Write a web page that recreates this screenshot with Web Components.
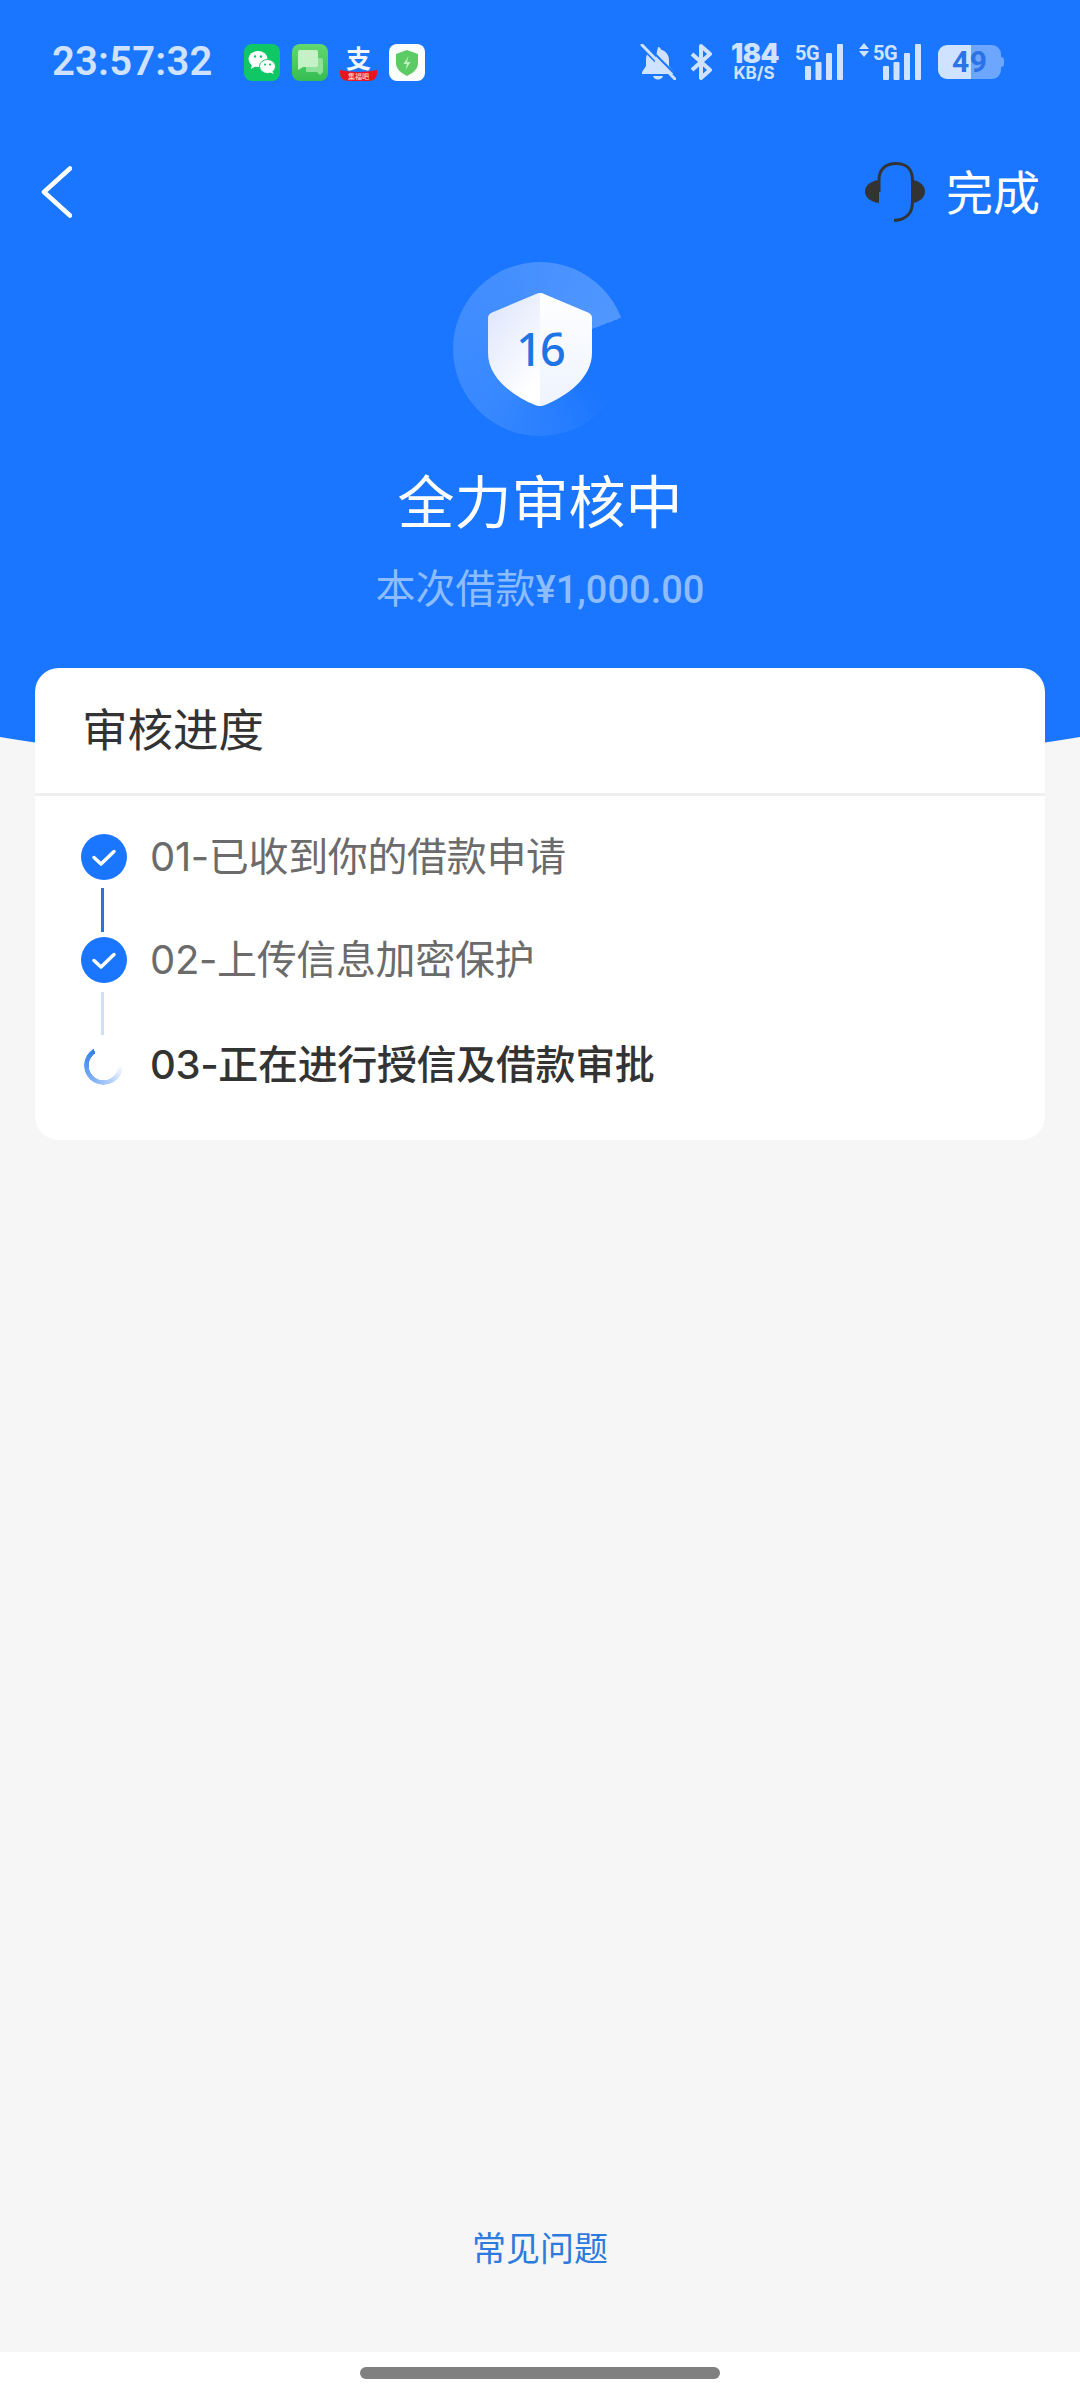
<!DOCTYPE html>
<html lang="zh">
<head>
<meta charset="utf-8">
<title>全力审核中</title>
<style>
  html, body { margin: 0; padding: 0; }
  body { width: 1080px; height: 2400px; overflow: hidden; background: #f6f6f6; font-family: Roboto, "Noto Sans CJK SC", sans-serif; }
  review-page { height: 2400px; }
</style>
</head>
<body>
<review-page>
  <hero-panel label="本次借款" amount="¥1,000.00" title="全力审核中" slot="hero">
    <status-bar slot="status" time="23:57:32"></status-bar>
    <nav-bar slot="nav" action="完成"></nav-bar>
    <shield-timer slot="timer" count="16"></shield-timer>
  </hero-panel>
  <progress-card slot="card" heading="审核进度">
    <progress-step state="done" line="done">01-已收到你的借款申请</progress-step>
    <progress-step state="done" line="pending">02-上传信息加密保护</progress-step>
    <progress-step state="active">03-正在进行授信及借款审批</progress-step>
  </progress-card>
  <faq-link slot="faq">常见问题</faq-link>
  <home-bar slot="home"></home-bar>
</review-page>

<script>
class ReviewPage extends HTMLElement {
  constructor(){
    super();
    const template = document.createElement('template');
    template.innerHTML = `
    <style>
      :host { display: flex; flex-direction: column; width: 1080px; }
      .grow { flex: 1; }
      .card { display: block; margin-top: -69px; position: relative; z-index: 1; }
    </style>
    <slot name="hero"></slot>
    <div class="card"><slot name="card"></slot></div>
    <div class="grow"></div>
    <slot name="faq"></slot>
    <slot name="home"></slot>`;
    this.attachShadow({mode: 'open'}).appendChild(template.content.cloneNode(true));
  }
}

class HeroPanel extends HTMLElement {
  constructor(){
    super();
    const template = document.createElement('template');
    template.innerHTML = `
    <style>
      :host { display: block; position: relative; height: 737px; background: #1a76ff; color: #fff; }
      /* bottom bulge of the blue header, runs on under the card */
      .bulge { position: absolute; left: 0; top: 577px; width: 1080px; height: 200px; overflow: hidden; }
      .bulge::before { content: ''; position: absolute; left: -360px; top: -200px; width: 1800px; height: 400px; border-radius: 50%; background: #1a76ff; }
      .inner { position: relative; display: flex; flex-direction: column; align-items: center; }
      .title { margin: 27px 0 0; font: 400 57px/70px "Noto Sans CJK SC", sans-serif; }
      .amount { margin: 32px 0 0; font-size: 40px; line-height: 50px; color: #8dbcff; white-space: nowrap; }
      .amount b { font-size: 38px; font-weight: 500; }
      ::slotted([slot="status"]), ::slotted([slot="nav"]) { align-self: stretch; }
    </style>
    <div class="bulge"></div>
    <div class="inner">
      <slot name="status"></slot>
      <slot name="nav"></slot>
      <slot name="timer"></slot>
      <h1 class="title"></h1>
      <div class="amount"><span></span><b></b></div>
    </div>`;
    this.root = this.attachShadow({mode: 'open'});
    this.root.appendChild(template.content.cloneNode(true));
    this.root.querySelector('.title').textContent = this.getAttribute('title');
    this.root.querySelector('.amount span').textContent = this.getAttribute('label');
    this.root.querySelector('.amount b').textContent = this.getAttribute('amount');
  }
}

class StatusBar extends HTMLElement {
  constructor(){
    super();
    const template = document.createElement('template');
    template.innerHTML = `
    <style>
      :host { display: flex; align-items: center; height: 122px; padding: 2px 0 0 52px; box-sizing: border-box; color: #cfe2ff; font-family: Inter, Roboto, sans-serif; }
      svg { display: block; flex: none; }
      .time { width: 192px; font: 600 40px/44px Roboto, sans-serif; letter-spacing: .2px; }
      .apps { display: flex; align-items: center; gap: 12px; }
      .apps svg { width: 36px; height: 37px; }
      .ali { display: flex; flex-direction: column; align-items: center; width: 37px; height: 37px; }
      .ali .zhi { height: 26px; font: 700 25px/26px "Noto Sans CJK SC", sans-serif; color: #f2f7ff; }
      .ali .band { position: relative; width: 37px; height: 11px; text-align: center; font: 500 7px/12px "Noto Sans CJK SC", sans-serif; color: #ffd9c8; }
      .apps .ali svg { position: absolute; left: 0; top: 0; width: 37px; height: 11px; }
      .ali .band span { position: relative; }
      .right { display: flex; align-items: center; margin-left: auto; margin-right: 76px; }
      .speed { width: 46px; margin: 0 18px 0 19px; text-align: center; font-weight: 700; white-space: nowrap; }
      .speed b { display: block; font-size: 27px; line-height: 22px; letter-spacing: -.5px; }
      .speed i { display: block; font-style: normal; font-size: 17px; line-height: 16px; }
      .sig { position: relative; width: 48px; height: 36px; }
      .sig span { position: absolute; left: 0; top: 0; font: 700 20px/18px Roboto, sans-serif; letter-spacing: -.5px; }
      .sig svg { position: absolute; right: 0; top: 0; }
      .arrows { margin-left: 16px; }
      .batt { position: relative; width: 66px; height: 34px; margin-left: 17px; }
      .batt .bg { display: block; }
      .batt span { position: absolute; left: 14px; top: 0; font: 700 30px/34px Roboto, sans-serif; color: #2a72e6; letter-spacing: .5px; }
    </style>
    <div class="time"></div>
    <div class="apps">
      <svg viewBox="0 0 36 37" aria-label="微信">
        <rect width="36" height="37" rx="8" fill="#10c765"/>
        <ellipse cx="14" cy="15" rx="9.500" ry="8" fill="#fff"/>
        <path d="M8 20l-1 5 5-3z" fill="#fff"/>
        <ellipse cx="23.500" cy="22.500" rx="8" ry="7" fill="#fff" stroke="#10c765" stroke-width="1"/>
        <path d="M28 27l2 3-5-2z" fill="#fff"/>
        <circle cx="11" cy="12.500" r="1.200" fill="#10c765"/><circle cx="17" cy="12.500" r="1.200" fill="#10c765"/>
        <circle cx="21" cy="20.500" r="1.100" fill="#10c765"/><circle cx="26" cy="20.500" r="1.100" fill="#10c765"/>
      </svg>
      <svg viewBox="0 0 36 37" aria-label="信息">
        <defs><linearGradient id="msg" x1="0" y1="0" x2="0" y2="1"><stop offset="0" stop-color="#62d96f"/><stop offset="1" stop-color="#35bd52"/></linearGradient></defs>
        <rect width="36" height="37" rx="8" fill="url(#msg)"/>
        <path d="M14 14h15a2 2 0 0 1 2 2v12l-3 3-3-3H14z" fill="#8fe09a"/>
        <path d="M8 6h16a2 2 0 0 1 2 2v13a2 2 0 0 1-2 2H11l-5 3V8a2 2 0 0 1 2-2z" fill="#c6f0c6"/>
      </svg>
      <div class="ali">
        <div class="zhi">支</div>
        <div class="band">
          <svg viewBox="0 0 37 11"><path d="M0 0q18.500 4 37 0v3q0 8-9 8H9q-9 0-9-8z" fill="#e8151f"/></svg>
          <span>集福吧</span>
        </div>
      </div>
      <svg viewBox="0 0 36 37" aria-label="安全">
        <rect width="36" height="37" rx="8" fill="#fbfffb"/>
        <path d="M18 6l11 4v9c0 6-5 10-11 13C12 29 7 25 7 19v-9z" fill="#5ccb66"/>
        <path d="M19.500 12l-5 8h3.500l-1.500 6 5-8h-3.500z" fill="#bff0bf"/>
      </svg>
    </div>
    <div class="right">
      <svg width="36" height="36" viewBox="0 0 36 36" fill="#cfe2ff" aria-label="静音">
        <path d="M18 3c1.700 0 2.800 1 2.800 2.500C26 7 29 11 29 16v6l5 6v2H12z"/>
        <path d="M6 15c0-1.500.3-3 1-4.500L26 30H2v-2l4-6z"/>
        <path d="M13 32h10c-.5 2.200-2.500 3.500-5 3.500s-4.500-1.300-5-3.500z"/>
        <path d="M4 -1l34 34" stroke="#1a76ff" stroke-width="2"/>
        <path d="M2 1l33 34" stroke="#cfe2ff" stroke-width="3" stroke-linecap="round"/>
      </svg>
      <svg width="22" height="36" viewBox="0 0 22 36" fill="none" stroke="#cfe2ff" stroke-width="4" stroke-linejoin="round" style="margin-left:14px" aria-label="蓝牙">
        <path d="M2 10l18 16-9 8V2l9 8L2 26"/>
      </svg>
      <div class="speed"><b>184</b><i>KB/S</i></div>
      <div class="sig"><span>5G</span>
        <svg width="38" height="36" viewBox="0 0 38 36" fill="#cfe2ff"><rect x="0" y="22" width="6" height="14" rx="1"/><rect x="10.500" y="18" width="6" height="18" rx="1"/><rect x="21" y="9" width="6" height="27" rx="1"/><rect x="32" y="0" width="6" height="36" rx="1"/></svg>
      </div>
      <svg class="arrows" width="10" height="14" viewBox="0 0 10 14" fill="#cfe2ff" style="align-self:flex-start"><path d="M5 0l5 6H0zM5 14L0 8h10z"/></svg>
      <div class="sig" style="margin-left:4px"><span>5G</span>
        <svg width="38" height="36" viewBox="0 0 38 36" fill="#cfe2ff"><rect x="0" y="22" width="6" height="14" rx="1"/><rect x="10.500" y="18" width="6" height="18" rx="1"/><rect x="21" y="9" width="6" height="27" rx="1"/><rect x="32" y="0" width="6" height="36" rx="1"/></svg>
      </div>
      <div class="batt">
        <svg class="bg" width="66" height="34" viewBox="0 0 66 34">
          <path d="M33 0h21a9 9 0 0 1 9 9v16a9 9 0 0 1-9 9H33z" fill="#6ca6ff"/>
          <path d="M9 0h24v34H9a9 9 0 0 1-9-9V9a9 9 0 0 1 9-9z" fill="#cfe2ff"/>
          <path d="M63 12a3 3 0 0 1 3 3v4a3 3 0 0 1-3 3z" fill="#6ca6ff"/>
        </svg>
        <span>49</span>
      </div>
    </div>`;
    this.root = this.attachShadow({mode: 'open'});
    this.root.appendChild(template.content.cloneNode(true));
    this.root.querySelector('.time').textContent = this.getAttribute('time');
  }
}

class NavBar extends HTMLElement {
  constructor(){
    super();
    const template = document.createElement('template');
    template.innerHTML = `
    <style>
      :host { display: flex; align-items: center; height: 140px; padding: 0 40px 0 41px; box-sizing: border-box; }
      svg { display: block; flex: none; }
      .right { display: flex; align-items: center; gap: 21px; margin-left: auto; }
      .action { margin-top: -4px; font: 400 47px/60px "Noto Sans CJK SC", sans-serif; color: #fff; }
    </style>
    <svg width="31" height="52" viewBox="0 0 31 52" fill="none" stroke="#fff" stroke-width="4.500" stroke-linecap="round" stroke-linejoin="round" aria-label="返回">
      <path d="M29 2.500L3 26l26 23.500"/>
    </svg>
    <div class="right">
      <svg width="60" height="60" viewBox="0 0 60 60" aria-label="客服">
        <path d="M14 18C5 19 0 24 0 29.500S5 40 14 41z" fill="#333"/>
        <path d="M48 18c7 1 12 6 12 11.500S55 40 48 41z" fill="#333"/>
        <path d="M14 30V18C14 7 21 1.500 31 1.500S47.500 7 47.500 18v22C47.500 50 42 58 29 58.500" fill="none" stroke="#333" stroke-width="3"/>
      </svg>
      <div class="action"></div>
    </div>`;
    this.root = this.attachShadow({mode: 'open'});
    this.root.appendChild(template.content.cloneNode(true));
    this.root.querySelector('.action').textContent = this.getAttribute('action');
  }
}

class ShieldTimer extends HTMLElement {
  constructor(){
    super();
    const template = document.createElement('template');
    template.innerHTML = `
    <style>
      :host { display: grid; place-items: center; width: 174px; height: 174px; border-radius: 50%; background: conic-gradient(from 69deg, rgba(255,255,255,0) 0deg, rgba(255,255,255,0) 55deg, rgba(255,255,255,.13) 150deg, rgba(255,255,255,.18) 260deg, rgba(255,255,255,.24) 360deg); }
      .shield { position: relative; width: 104px; height: 113px; }
      svg { display: block; }
      .num { position: absolute; left: 0; right: 0; top: 31px; text-align: center; font: 500 45px/50px "Noto Sans", Roboto, sans-serif; color: #1f74e6; letter-spacing: -2px; }
    </style>
    <div class="shield">
      <svg width="104" height="113" viewBox="0 0 104 113">
        <defs>
          <linearGradient id="sl" x1="0" y1="0" x2=".6" y2="1"><stop offset="0" stop-color="#dce4fc"/><stop offset="1" stop-color="#ffffff"/></linearGradient>
          <linearGradient id="sr" x1="0" y1="0" x2="0" y2="1"><stop offset="0" stop-color="#ffffff"/><stop offset="1" stop-color="#eef3fe"/></linearGradient>
        </defs>
        <path d="M52 0v113c-2 0-3-.3-5-1C25 103 0 85 0 60V25q0-4 4-5.500L48 1q2-1 4-1z" fill="url(#sl)"/>
        <path d="M52 0c2 0 3 .4 4 1l44 18.500q4 1.500 4 5.500v35c0 25-25 43-47 52-2 .7-3 1-5 1z" fill="url(#sr)"/>
      </svg>
      <div class="num"></div>
    </div>`;
    this.root = this.attachShadow({mode: 'open'});
    this.root.appendChild(template.content.cloneNode(true));
    this.root.querySelector('.num').textContent = this.getAttribute('count');
  }
}

class ProgressCard extends HTMLElement {
  constructor(){
    super();
    const template = document.createElement('template');
    template.innerHTML = `
    <style>
      :host { display: block; margin: 0 35px; background: #fff; border-radius: 24px; overflow: hidden; }
      .head { height: 125px; padding-left: 47px; border-bottom: 3px solid #efefef; font: 400 45.500px/119px "Noto Sans CJK SC", sans-serif; color: #333; }
      .list { padding: 38px 46px 52px; display: flex; flex-direction: column; }
    </style>
    <div class="head"></div>
    <div class="list"><slot></slot></div>`;
    this.root = this.attachShadow({mode: 'open'});
    this.root.appendChild(template.content.cloneNode(true));
    this.root.querySelector('.head').textContent = this.getAttribute('heading');
  }
}

class ProgressStep extends HTMLElement {
  constructor(){
    super();
    const state = this.getAttribute('state');
    const line = this.getAttribute('line');
    const icon = state == 'done'
      ? `<svg width="46" height="46" viewBox="0 0 46 46" aria-label="已完成"><circle cx="23" cy="23" r="23" fill="#1a76ff"/><path d="M13 23.500l7 6.500 13-12.500" fill="none" stroke="#fff" stroke-width="3.500" stroke-linecap="round" stroke-linejoin="round"/></svg>`
      : `<div class="spin"></div>`;
    const template = document.createElement('template');
    template.innerHTML = `
    <style>
      :host { display: block; }
      .row { display: flex; align-items: center; height: 46px; gap: 23px; font: 400 40px/46px Inter, "Noto Sans CJK SC", sans-serif; letter-spacing: -.35px; color: #6b6b6b; white-space: nowrap; }
      :host([state="active"]) .row { color: #333; font-weight: 500; }
      svg { display: block; flex: none; }
      .spin { flex: none; width: 46px; height: 46px; position: relative; }
      .spin::before { content: ''; position: absolute; left: 3px; top: 4px; width: 39px; height: 39px; border-radius: 50%;
        background: conic-gradient(from 90deg, rgba(120,170,245,0) 0deg, #b9d3fa 60deg, #6ea6f3 150deg, #2f7fe8 238deg, rgba(47,127,232,0) 238deg);
        -webkit-mask: radial-gradient(circle, transparent 14.500px, #000 15px);
        mask: radial-gradient(circle, transparent 14.500px, #000 15px); }
      .line { width: 3px; margin-left: 20px; }
      .line.done { height: 44px; margin-top: 8px; margin-bottom: 5px; background: #2a73d9; }
      .line.pending { height: 43px; margin-top: 9px; margin-bottom: 7px; background: #cfdff5; }
    </style>
    <div class="row">${icon}<span><slot></slot></span></div>
    ${line ? `<div class="line ${line}"></div>` : ''}`;
    this.attachShadow({mode: 'open'}).appendChild(template.content.cloneNode(true));
  }
}

class FaqLink extends HTMLElement {
  constructor(){
    super();
    const template = document.createElement('template');
    template.innerHTML = `
    <style>
      :host { display: block; padding-bottom: 80px; text-align: center; font: 400 34px/50px "Noto Sans CJK SC", sans-serif; color: #2d7bdf; }
    </style>
    <slot></slot>`;
    this.attachShadow({mode: 'open'}).appendChild(template.content.cloneNode(true));
  }
}

class HomeBar extends HTMLElement {
  constructor(){
    super();
    const template = document.createElement('template');
    template.innerHTML = `
    <style>
      :host { display: flex; justify-content: center; height: 48px; padding-top: 15px; box-sizing: border-box; background: #fff; }
      div { width: 360px; height: 12px; border-radius: 6px; background: #808080; }
    </style>
    <div></div>`;
    this.attachShadow({mode: 'open'}).appendChild(template.content.cloneNode(true));
  }
}

customElements.define('review-page', ReviewPage);
customElements.define('hero-panel', HeroPanel);
customElements.define('status-bar', StatusBar);
customElements.define('nav-bar', NavBar);
customElements.define('shield-timer', ShieldTimer);
customElements.define('progress-card', ProgressCard);
customElements.define('progress-step', ProgressStep);
customElements.define('faq-link', FaqLink);
customElements.define('home-bar', HomeBar);
</script>
</body>
</html>
